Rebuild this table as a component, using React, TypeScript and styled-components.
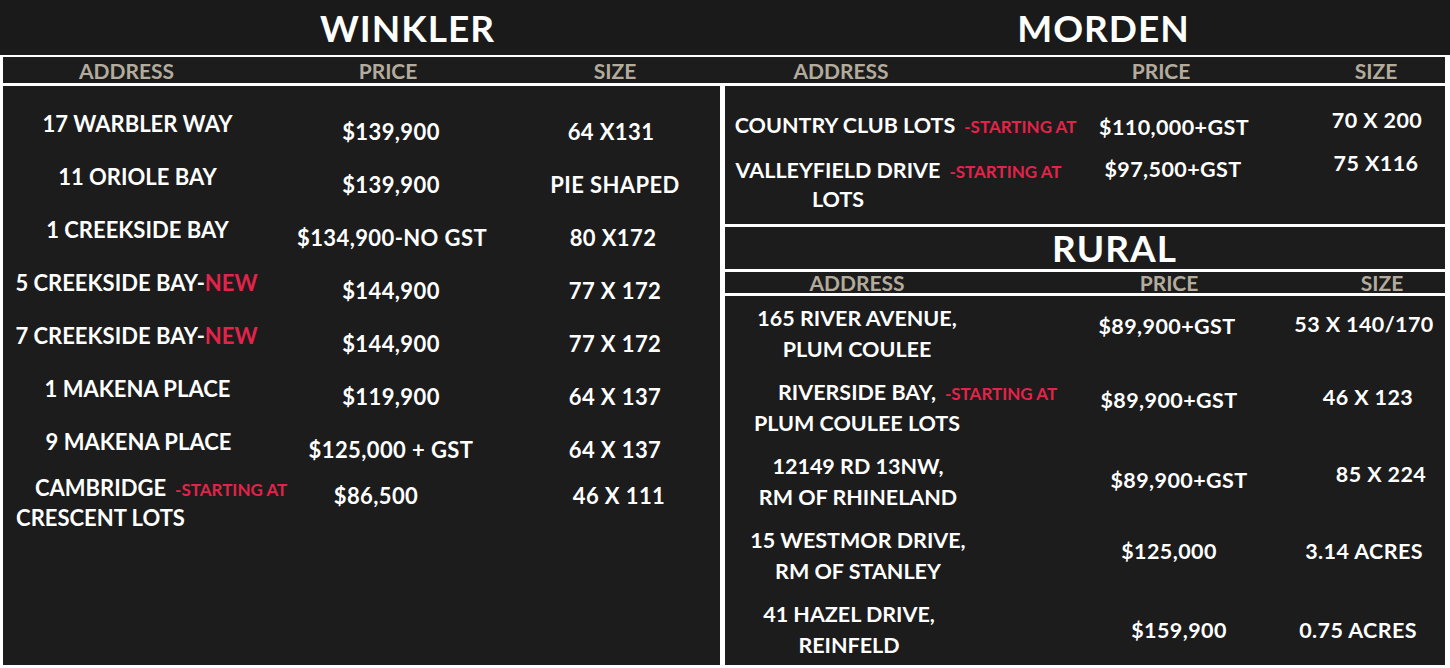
import React from "react";
import styled, { createGlobalStyle } from "styled-components";

const DARK = "#1c1c1c";
const RED = "#e3234a";
const LABEL = "#b3ac9c";

const GlobalStyle = createGlobalStyle`
  html, body {
    margin: 0;
    padding: 0;
    background: #ffffff;
  }
  body {
    font-family: Lato, "Open Sans", sans-serif;
  }
`;

// moves centred text sideways by dx px without leaving the flow
const shiftX = (dx = 0) =>
  `padding-left: ${Math.max(0, dx * 2)}px; padding-right: ${Math.max(0, -dx * 2)}px;`;

const Page = styled.div`
  width: 1450px;
  height: 668px;
  background: #ffffff;
  display: flex;
  flex-direction: column;
  overflow: hidden;
`;

const TopBand = styled.header`
  height: 55px;
  flex: none;
  background: #1a1a1a;
  display: grid;
  grid-template-columns: 725px 725px;
  align-items: center;
`;

const CityTitle = styled.h1<{ $dx?: number }>`
  margin: 0;
  color: #ffffff;
  font: 700 37px/55px Lato, sans-serif;
  letter-spacing: 1px;
  text-align: center;
  ${({ $dx }) => shiftX($dx)}
`;

const Frame = styled.main`
  flex: 1;
  min-height: 0;
  padding: 2px 5px 3px 3px;
  display: flex;
  flex-direction: column;
  gap: 3px;
`;

const HeaderBar = styled.div`
  height: 26px;
  flex: none;
  background: ${DARK};
  display: grid;
  grid-template-columns: 717px 720px;
  column-gap: 5px;
`;

const LabelRow = styled.div<{ $cols: string; $h: number }>`
  display: grid;
  grid-template-columns: ${({ $cols }) => $cols};
  height: ${({ $h }) => $h}px;
  align-items: center;
`;

const Label = styled.span<{ $dx?: number }>`
  color: ${LABEL};
  font: 700 21px/1 Lato, sans-serif;
  text-align: center;
  white-space: nowrap;
  ${({ $dx }) => shiftX($dx)}
`;

const Body = styled.div`
  flex: 1;
  min-height: 0;
  display: grid;
  grid-template-columns: 717px 720px;
  column-gap: 5px;
`;

const Panel = styled.section<{ $pt: number; $gap: number; $h?: number }>`
  background: ${DARK};
  padding-top: ${({ $pt }) => $pt}px;
  display: flex;
  flex-direction: column;
  gap: ${({ $gap }) => $gap}px;
  ${({ $h }) => ($h ? `height: ${$h}px; flex: none; box-sizing: border-box;` : "flex: 1; min-height: 0;")}
`;

const RightColumn = styled.div`
  display: flex;
  flex-direction: column;
  gap: 3px;
`;

const RuralTitleBox = styled.div`
  height: 42px;
  flex: none;
  background: ${DARK};
  display: flex;
  align-items: center;
  justify-content: center;
`;

const RuralTitle = styled.h2`
  margin: 0;
  color: #ffffff;
  font: 700 37px/42px Lato, sans-serif;
  letter-spacing: 1px;
  padding-left: 59px;
`;

const Bar = styled.div`
  height: 21px;
  flex: none;
  background: ${DARK};
`;

const Row = styled.div<{ $cols: string; $lift?: number }>`
  display: grid;
  grid-template-columns: ${({ $cols }) => $cols};
  align-items: start;
  height: fit-content;
  margin-top: ${({ $lift }) => $lift || 0}px;
`;

const Addr = styled.div<{ $lh: number; $fs: number; $dx?: number }>`
  color: #ffffff;
  font: 700 ${({ $fs }) => $fs}px/${({ $lh }) => $lh}px Lato, sans-serif;
  text-align: center;
  white-space: nowrap;
  ${({ $dx }) => shiftX($dx)}
`;

const Line = styled.div``;

const Hot = styled.span`
  color: ${RED};
`;

const Tag = styled.span`
  display: inline-block;
  width: 0;
  text-indent: 9px;
  color: ${RED};
  font-size: 17px;
  line-height: 1;
  white-space: nowrap;
`;

const Value = styled.div<{ $lh: number; $fs: number; $dx?: number; $dy?: number }>`
  color: #ffffff;
  font: 700 ${({ $fs }) => $fs}px/${({ $lh }) => $lh}px Lato, sans-serif;
  letter-spacing: 0.4px;
  text-align: center;
  white-space: nowrap;
  height: ${({ $lh }) => $lh}px;
  margin-top: ${({ $dy }) => $dy || 0}px;
  margin-bottom: ${({ $dy }) => -($dy || 0)}px;
  ${({ $dx }) => shiftX($dx)}
`;

type Lot = {
  lines: string[];
  hot?: string;
  tag?: string;
  addrDx?: number;
  price: string;
  priceDx?: number;
  priceDy?: number;
  size: string;
  sizeDx?: number;
  sizeDy?: number;
  lift?: number;
};

const LEFT_COLS = "269px 238px 210px";
const MORDEN_COLS = "234px 1fr 170px";
const RURAL_COLS = "264px 1fr 170px";

const winkler: Lot[] = [
  { lines: ["17 WARBLER WAY"], price: "$139,900", size: "64 X131", sizeDx: -4 },
  { lines: ["11 ORIOLE BAY"], price: "$139,900", size: "PIE SHAPED" },
  { lines: ["1 CREEKSIDE BAY"], price: "$134,900-NO GST", priceDx: 1, size: "80 X172", sizeDx: -2 },
  { lines: ["5 CREEKSIDE BAY-"], hot: "NEW", addrDx: -1, price: "$144,900", size: "77 X 172" },
  { lines: ["7 CREEKSIDE BAY-"], hot: "NEW", addrDx: -1, price: "$144,900", size: "77 X 172" },
  { lines: ["1 MAKENA PLACE"], price: "$119,900", size: "64 X 137" },
  { lines: ["9 MAKENA PLACE"], addrDx: 1, price: "$125,000 + GST", size: "64 X 137" },
  {
    lines: ["CAMBRIDGE", "CRESCENT LOTS"],
    tag: "-STARTING AT",
    addrDx: -37,
    price: "$86,500",
    priceDx: -15,
    size: "46 X 111",
    sizeDx: 4,
    lift: -7,
  },
];

const morden: Lot[] = [
  {
    lines: ["COUNTRY CLUB LOTS"],
    tag: "-STARTING AT",
    addrDx: 3,
    price: "$110,000+GST",
    priceDx: 57,
    priceDy: 2,
    size: "70 X 200",
    sizeDx: 17,
    sizeDy: -5,
  },
  {
    lines: ["VALLEYFIELD DRIVE", "LOTS"],
    tag: "-STARTING AT",
    addrDx: -4,
    price: "$97,500+GST",
    priceDx: 56,
    priceDy: -1,
    size: "75 X116",
    sizeDx: 16,
    sizeDy: -7,
  },
];

const rural: Lot[] = [
  { lines: ["165 RIVER AVENUE,", "PLUM COULEE"], price: "$89,900+GST", priceDx: 35, priceDy: 8, size: "53 X 140/170", sizeDx: 4, sizeDy: 6 },
  { lines: ["RIVERSIDE BAY,", "PLUM COULEE LOTS"], tag: "-STARTING AT", price: "$89,900+GST", priceDx: 37, priceDy: 8, size: "46 X 123", sizeDx: 8, sizeDy: 5 },
  { lines: ["12149 RD 13NW,", "RM OF RHINELAND"], addrDx: 1, price: "$89,900+GST", priceDx: 47, priceDy: 14, size: "85 X 224", sizeDx: 21, sizeDy: 8 },
  { lines: ["15 WESTMOR DRIVE,", "RM OF STANLEY"], addrDx: 1, price: "$125,000", priceDx: 37, priceDy: 11, size: "3.14 ACRES", sizeDx: 4, sizeDy: 11 },
  { lines: ["41 HAZEL DRIVE,", "REINFELD"], addrDx: -8, price: "$159,900", priceDx: 47, priceDy: 16, size: "0.75 ACRES", sizeDx: -2, sizeDy: 16 },
];

type RowProps = { lot: Lot; cols: string; lh: number; fs: number; valueDy: number };

const LotRow = ({ lot, cols, lh, fs, valueDy }: RowProps) => (
  <Row $cols={cols} $lift={lot.lift}>
    <Addr $lh={lh} $fs={fs} $dx={lot.addrDx}>
      {lot.lines.map((text, i) => (
        <Line key={text}>
          {text}
          {i === 0 && lot.hot && <Hot>{lot.hot}</Hot>}
          {i === 0 && lot.tag && <Tag>{lot.tag}</Tag>}
        </Line>
      ))}
    </Addr>
    <Value $lh={lh} $fs={fs} $dx={lot.priceDx} $dy={lot.priceDy ?? valueDy}>
      {lot.price}
    </Value>
    <Value $lh={lh} $fs={fs} $dx={lot.sizeDx} $dy={lot.sizeDy ?? valueDy}>
      {lot.size}
    </Value>
  </Row>
);

const Labels = ({ cols, h, dx }: { cols: string; h: number; dx: [number, number, number] }) => (
  <LabelRow $cols={cols} $h={h}>
    <Label $dx={dx[0]}>ADDRESS</Label>
    <Label $dx={dx[1]}>PRICE</Label>
    <Label $dx={dx[2]}>SIZE</Label>
  </LabelRow>
);

export default function App() {
  return (
    <Page>
      <GlobalStyle />
      <TopBand>
        <CityTitle $dx={45}>WINKLER</CityTitle>
        <CityTitle $dx={16}>MORDEN</CityTitle>
      </TopBand>
      <Frame>
        <HeaderBar>
          <Labels cols={LEFT_COLS} h={26} dx={[-11, -3, 0]} />
          <Labels cols={MORDEN_COLS} h={26} dx={[-1, 44, 16]} />
        </HeaderBar>
        <Body>
          <Panel $pt={23} $gap={23}>
            {winkler.map((lot) => (
              <LotRow key={lot.lines[0]} lot={lot} cols={LEFT_COLS} lh={30} fs={22} valueDy={8} />
            ))}
          </Panel>
          <RightColumn>
            <Panel $pt={25} $gap={16} $h={138}>
              {morden.map((lot) => (
                <LotRow key={lot.lines[0]} lot={lot} cols={MORDEN_COLS} lh={29} fs={21.5} valueDy={0} />
              ))}
            </Panel>
            <RuralTitleBox>
              <RuralTitle>RURAL</RuralTitle>
            </RuralTitleBox>
            <Bar>
              <Labels cols={RURAL_COLS} h={21} dx={[0, 37, 22]} />
            </Bar>
            <Panel $pt={7} $gap={12}>
              {rural.map((lot) => (
                <LotRow key={lot.lines[0]} lot={lot} cols={RURAL_COLS} lh={31} fs={21.5} valueDy={8} />
              ))}
            </Panel>
          </RightColumn>
        </Body>
      </Frame>
    </Page>
  );
}
